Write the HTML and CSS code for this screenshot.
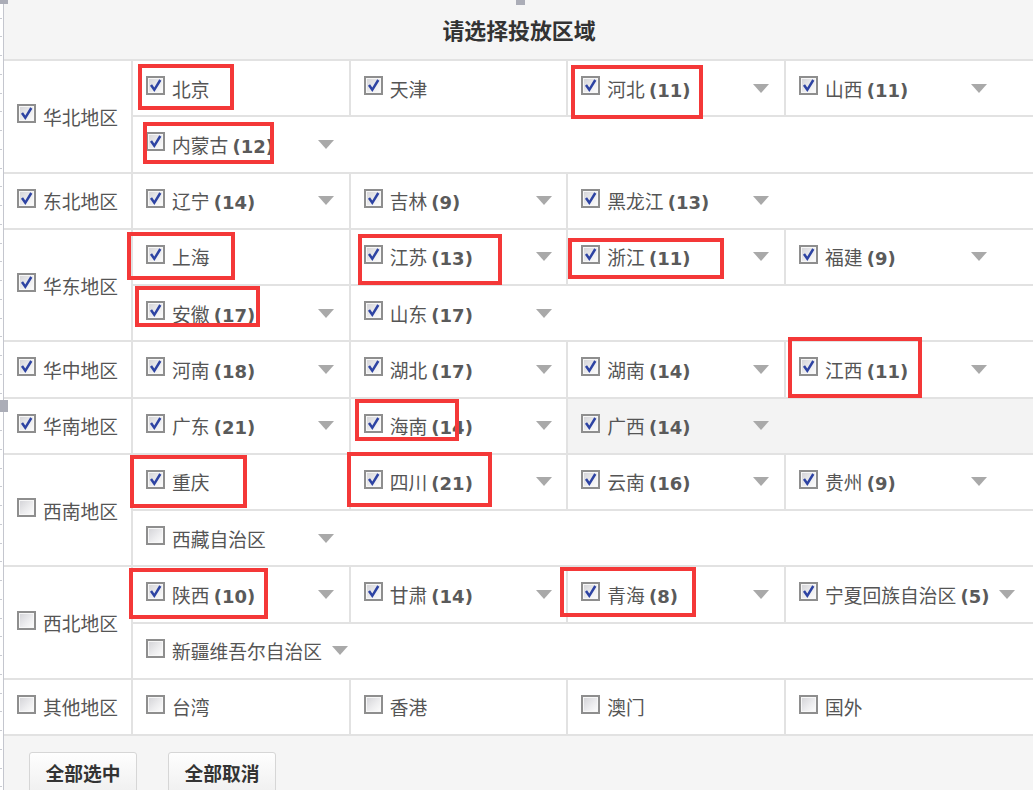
FILE: index.html
```html
<!DOCTYPE html>
<html lang="zh-CN">
<head>
<meta charset="utf-8">
<title>请选择投放区域</title>
<link rel="stylesheet" href="styles.css">
</head>
<body>
<div class="page">
  <div class="panel">
    <div class="head">请选择投放区域</div>

    <div class="region">
      <div class="rname"><span class="cb on"><svg viewBox="0 0 15 15"><path d="M3 7 L6.3 11.8 L12.3 2"/></svg></span><span>华北地区</span></div>
      <div class="subs">
        <div class="sub">
          <div class="cell"><span class="cb on"><svg viewBox="0 0 15 15"><path d="M3 7 L6.3 11.8 L12.3 2"/></svg></span><span class="txt">北京</span></div>
          <div class="cell"><span class="cb on"><svg viewBox="0 0 15 15"><path d="M3 7 L6.3 11.8 L12.3 2"/></svg></span><span class="txt">天津</span></div>
          <div class="cell"><span class="cb on"><svg viewBox="0 0 15 15"><path d="M3 7 L6.3 11.8 L12.3 2"/></svg></span><span class="txt">河北 <b class="num">(11)</b></span><span class="arrow"></span></div>
          <div class="cell last"><span class="cb on"><svg viewBox="0 0 15 15"><path d="M3 7 L6.3 11.8 L12.3 2"/></svg></span><span class="txt">山西 <b class="num">(11)</b></span><span class="arrow"></span></div>
        </div>
        <div class="sub">
          <div class="cell last"><span class="cb on"><svg viewBox="0 0 15 15"><path d="M3 7 L6.3 11.8 L12.3 2"/></svg></span><span class="txt">内蒙古 <b class="num">(12)</b></span><span class="arrow"></span></div>
        </div>
      </div>
    </div>

    <div class="region">
      <div class="rname"><span class="cb on"><svg viewBox="0 0 15 15"><path d="M3 7 L6.3 11.8 L12.3 2"/></svg></span><span>东北地区</span></div>
      <div class="subs">
        <div class="sub">
          <div class="cell"><span class="cb on"><svg viewBox="0 0 15 15"><path d="M3 7 L6.3 11.8 L12.3 2"/></svg></span><span class="txt">辽宁 <b class="num">(14)</b></span><span class="arrow"></span></div>
          <div class="cell"><span class="cb on"><svg viewBox="0 0 15 15"><path d="M3 7 L6.3 11.8 L12.3 2"/></svg></span><span class="txt">吉林 <b class="num">(9)</b></span><span class="arrow"></span></div>
          <div class="cell last"><span class="cb on"><svg viewBox="0 0 15 15"><path d="M3 7 L6.3 11.8 L12.3 2"/></svg></span><span class="txt">黑龙江 <b class="num">(13)</b></span><span class="arrow"></span></div>
        </div>
      </div>
    </div>

    <div class="region">
      <div class="rname"><span class="cb on"><svg viewBox="0 0 15 15"><path d="M3 7 L6.3 11.8 L12.3 2"/></svg></span><span>华东地区</span></div>
      <div class="subs">
        <div class="sub">
          <div class="cell"><span class="cb on"><svg viewBox="0 0 15 15"><path d="M3 7 L6.3 11.8 L12.3 2"/></svg></span><span class="txt">上海</span></div>
          <div class="cell"><span class="cb on"><svg viewBox="0 0 15 15"><path d="M3 7 L6.3 11.8 L12.3 2"/></svg></span><span class="txt">江苏 <b class="num">(13)</b></span><span class="arrow"></span></div>
          <div class="cell"><span class="cb on"><svg viewBox="0 0 15 15"><path d="M3 7 L6.3 11.8 L12.3 2"/></svg></span><span class="txt">浙江 <b class="num">(11)</b></span><span class="arrow"></span></div>
          <div class="cell last"><span class="cb on"><svg viewBox="0 0 15 15"><path d="M3 7 L6.3 11.8 L12.3 2"/></svg></span><span class="txt">福建 <b class="num">(9)</b></span><span class="arrow"></span></div>
        </div>
        <div class="sub">
          <div class="cell"><span class="cb on"><svg viewBox="0 0 15 15"><path d="M3 7 L6.3 11.8 L12.3 2"/></svg></span><span class="txt">安徽 <b class="num">(17)</b></span><span class="arrow"></span></div>
          <div class="cell last"><span class="cb on"><svg viewBox="0 0 15 15"><path d="M3 7 L6.3 11.8 L12.3 2"/></svg></span><span class="txt">山东 <b class="num">(17)</b></span><span class="arrow"></span></div>
        </div>
      </div>
    </div>

    <div class="region">
      <div class="rname"><span class="cb on"><svg viewBox="0 0 15 15"><path d="M3 7 L6.3 11.8 L12.3 2"/></svg></span><span>华中地区</span></div>
      <div class="subs">
        <div class="sub">
          <div class="cell"><span class="cb on"><svg viewBox="0 0 15 15"><path d="M3 7 L6.3 11.8 L12.3 2"/></svg></span><span class="txt">河南 <b class="num">(18)</b></span><span class="arrow"></span></div>
          <div class="cell"><span class="cb on"><svg viewBox="0 0 15 15"><path d="M3 7 L6.3 11.8 L12.3 2"/></svg></span><span class="txt">湖北 <b class="num">(17)</b></span><span class="arrow"></span></div>
          <div class="cell"><span class="cb on"><svg viewBox="0 0 15 15"><path d="M3 7 L6.3 11.8 L12.3 2"/></svg></span><span class="txt">湖南 <b class="num">(14)</b></span><span class="arrow"></span></div>
          <div class="cell last"><span class="cb on"><svg viewBox="0 0 15 15"><path d="M3 7 L6.3 11.8 L12.3 2"/></svg></span><span class="txt">江西 <b class="num">(11)</b></span><span class="arrow"></span></div>
        </div>
      </div>
    </div>

    <div class="region">
      <div class="rname"><span class="cb on"><svg viewBox="0 0 15 15"><path d="M3 7 L6.3 11.8 L12.3 2"/></svg></span><span>华南地区</span></div>
      <div class="subs">
        <div class="sub">
          <div class="cell"><span class="cb on"><svg viewBox="0 0 15 15"><path d="M3 7 L6.3 11.8 L12.3 2"/></svg></span><span class="txt">广东 <b class="num">(21)</b></span><span class="arrow"></span></div>
          <div class="cell"><span class="cb on"><svg viewBox="0 0 15 15"><path d="M3 7 L6.3 11.8 L12.3 2"/></svg></span><span class="txt">海南 <b class="num">(14)</b></span><span class="arrow"></span></div>
          <div class="cell last hl"><span class="cb on"><svg viewBox="0 0 15 15"><path d="M3 7 L6.3 11.8 L12.3 2"/></svg></span><span class="txt">广西 <b class="num">(14)</b></span><span class="arrow"></span></div>
        </div>
      </div>
    </div>

    <div class="region">
      <div class="rname"><span class="cb"></span><span>西南地区</span></div>
      <div class="subs">
        <div class="sub">
          <div class="cell"><span class="cb on"><svg viewBox="0 0 15 15"><path d="M3 7 L6.3 11.8 L12.3 2"/></svg></span><span class="txt">重庆</span></div>
          <div class="cell"><span class="cb on"><svg viewBox="0 0 15 15"><path d="M3 7 L6.3 11.8 L12.3 2"/></svg></span><span class="txt">四川 <b class="num">(21)</b></span><span class="arrow"></span></div>
          <div class="cell"><span class="cb on"><svg viewBox="0 0 15 15"><path d="M3 7 L6.3 11.8 L12.3 2"/></svg></span><span class="txt">云南 <b class="num">(16)</b></span><span class="arrow"></span></div>
          <div class="cell last"><span class="cb on"><svg viewBox="0 0 15 15"><path d="M3 7 L6.3 11.8 L12.3 2"/></svg></span><span class="txt">贵州 <b class="num">(9)</b></span><span class="arrow"></span></div>
        </div>
        <div class="sub">
          <div class="cell last"><span class="cb"></span><span class="txt">西藏自治区</span><span class="arrow"></span></div>
        </div>
      </div>
    </div>

    <div class="region">
      <div class="rname"><span class="cb"></span><span>西北地区</span></div>
      <div class="subs">
        <div class="sub">
          <div class="cell"><span class="cb on"><svg viewBox="0 0 15 15"><path d="M3 7 L6.3 11.8 L12.3 2"/></svg></span><span class="txt">陕西 <b class="num">(10)</b></span><span class="arrow"></span></div>
          <div class="cell"><span class="cb on"><svg viewBox="0 0 15 15"><path d="M3 7 L6.3 11.8 L12.3 2"/></svg></span><span class="txt">甘肃 <b class="num">(14)</b></span><span class="arrow"></span></div>
          <div class="cell"><span class="cb on"><svg viewBox="0 0 15 15"><path d="M3 7 L6.3 11.8 L12.3 2"/></svg></span><span class="txt">青海 <b class="num">(8)</b></span><span class="arrow"></span></div>
          <div class="cell last"><span class="cb on"><svg viewBox="0 0 15 15"><path d="M3 7 L6.3 11.8 L12.3 2"/></svg></span><span class="txt">宁夏回族自治区 <b class="num">(5)</b></span><span class="arrow"></span></div>
        </div>
        <div class="sub">
          <div class="cell last"><span class="cb"></span><span class="txt">新疆维吾尔自治区</span><span class="arrow"></span></div>
        </div>
      </div>
    </div>

    <div class="region">
      <div class="rname"><span class="cb"></span><span>其他地区</span></div>
      <div class="subs">
        <div class="sub">
          <div class="cell"><span class="cb"></span><span class="txt">台湾</span></div>
          <div class="cell"><span class="cb"></span><span class="txt">香港</span></div>
          <div class="cell"><span class="cb"></span><span class="txt">澳门</span></div>
          <div class="cell last"><span class="cb"></span><span class="txt">国外</span></div>
        </div>
      </div>
    </div>

    <div class="foot">
      <button class="btn" type="button">全部选中</button>
      <button class="btn" type="button">全部取消</button>
    </div>
  </div>

  <div class="ruler"></div>
  <div class="sq sq1"></div>
  <div class="sq sq2"></div>
  <div class="sq sq3"></div>

  <div class="mk m1"></div>
  <div class="mk m2"></div>
  <div class="mk m3"></div>
  <div class="mk m4"></div>
  <div class="mk m5"></div>
  <div class="mk m6"></div>
  <div class="mk m7"></div>
  <div class="mk m8"></div>
  <div class="mk m9"></div>
  <div class="mk m10"></div>
  <div class="mk m11"></div>
  <div class="mk m12"></div>
  <div class="mk m13"></div>
</div>
</body>
</html>
```

FILE: styles.css
```css
html, body {
  margin: 0;
  padding: 0;
  overflow: hidden;
  background: #fff;
}

body {
  font-family: "Noto Sans CJK SC", "Noto Sans", sans-serif;
  font-size: 18.75px;
  color: #555;
}

.page {
  position: relative;
  width: 1033px;
  height: 790px;
  overflow: hidden;
}

.panel {
  margin-left: 4px;
  width: 1030px;
  height: 790px;
  display: flex;
  flex-direction: column;
}

.head {
  height: 61px;
  flex: none;
  box-sizing: border-box;
  border-bottom: 2px solid #e2e2e2;
  background: #f5f5f5;
  display: flex;
  align-items: center;
  justify-content: center;
  font-size: 21.9px;
  font-weight: 700;
  color: #333;
}

.region {
  display: flex;
  flex: none;
}

.rname {
  width: 129px;
  flex: none;
  box-sizing: border-box;
  border-right: 2px solid #e2e2e2;
  border-bottom: 2px solid #e2e2e2;
  display: flex;
  align-items: center;
  padding-left: 13px;
  white-space: nowrap;
}

.subs {
  flex: 1;
  display: flex;
  flex-direction: column;
}

.sub {
  height: 56.25px;
  box-sizing: border-box;
  border-bottom: 2px solid #e2e2e2;
  display: flex;
}

.cell {
  width: 217.67px;
  flex: none;
  box-sizing: border-box;
  border-right: 2px solid #e2e2e2;
  display: flex;
  align-items: center;
  padding-left: 13px;
}

.cell.last {
  flex: 1;
  border-right: none;
}

.cell.hl {
  background: #f3f3f3;
}

.cb {
  width: 19px;
  height: 19px;
  flex: none;
  box-sizing: border-box;
  border: 2px solid #8e8e8e;
  box-shadow: inset 0 0 0 1px #f7f7f7;
  background: linear-gradient(135deg, #d2d2d6 0%, #ececee 55%, #fdfdfd 100%);
  margin-right: 7px;
  margin-bottom: 5px;
  display: flex;
}

.cb svg {
  width: 100%;
  height: 100%;
}

.cb path {
  fill: none;
  stroke: #2d43a3;
  stroke-width: 2.5;
  stroke-linecap: butt;
  stroke-linejoin: miter;
}

.txt {
  min-width: 136px;
  margin-right: 10px;
  white-space: nowrap;
}

.num {
  font-family: "DejaVu Sans", "Noto Sans", sans-serif;
  font-weight: 700;
  font-size: 18px;
  color: #5a5a5a;
}

.arrow {
  flex: none;
  width: 0;
  height: 0;
  border-left: 8.5px solid transparent;
  border-right: 8.5px solid transparent;
  border-top: 9px solid #a9a9a9;
}

.foot {
  flex: 1;
  background: #f5f5f5;
  padding: 16px 0 0 25px;
  display: flex;
  align-items: flex-start;
  gap: 31px;
}

.btn {
  width: 108px;
  height: 41px;
  padding: 0;
  box-sizing: border-box;
  border: 1.5px solid #d6d6d6;
  border-radius: 3px;
  background: linear-gradient(#fefefe, #f0f0f0);
  font-family: "Noto Sans CJK SC", sans-serif;
  font-size: 18.75px;
  font-weight: 700;
  color: #333;
}

/* screenshot frame decorations */
.ruler {
  position: absolute;
  left: 0;
  top: 0;
  width: 4px;
  height: 790px;
  background:
    linear-gradient(#c4c6ce, #c4c6ce) right top / 1.5px 100% no-repeat,
    repeating-linear-gradient(to bottom, transparent 0, transparent 17.75px, #c9cbd2 17.75px, #c9cbd2 18.75px) left top / 2px 100% no-repeat;
}

.sq {
  position: absolute;
  background: #abadb7;
}

.sq1 { left: 0; top: 0; width: 8px; height: 4px; }
.sq2 { left: 0; top: 400px; width: 8px; height: 12px; }
.sq3 { left: 516px; top: 0; width: 9px; height: 5px; }

/* red annotation boxes */
.mk {
  position: absolute;
  box-sizing: border-box;
  border: 4px solid #f43838;
}

.m1 { left: 138px; top: 64px; width: 96px; height: 46px; }
.m2 { left: 143px; top: 122px; width: 131px; height: 42px; }
.m3 { left: 571px; top: 65px; width: 132px; height: 54px; }
.m4 { left: 127px; top: 232px; width: 108px; height: 48px; }
.m5 { left: 358px; top: 234px; width: 144px; height: 51px; }
.m6 { left: 568px; top: 238px; width: 156px; height: 41px; }
.m7 { left: 135px; top: 286px; width: 125px; height: 41px; }
.m8 { left: 788px; top: 337px; width: 134px; height: 61px; }
.m9 { left: 355px; top: 399px; width: 104px; height: 42px; }
.m10 { left: 130px; top: 455px; width: 117px; height: 53px; }
.m11 { left: 347px; top: 452px; width: 145px; height: 55px; }
.m12 { left: 129px; top: 568px; width: 139px; height: 51px; }
.m13 { left: 560px; top: 567px; width: 136px; height: 50px; }
```
